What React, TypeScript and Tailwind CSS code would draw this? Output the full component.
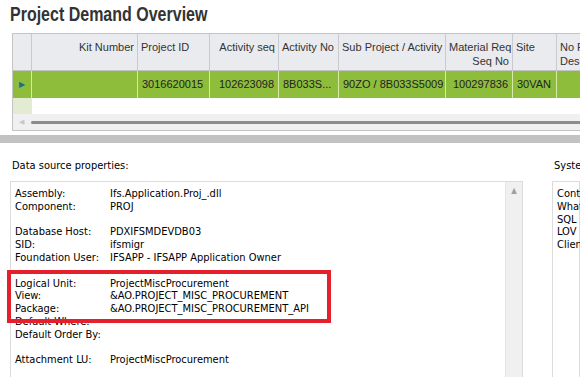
const cols = [
  { w: 19, head: [""], val: "", align: "left" },
  { w: 106, head: ["Kit Number"], val: "", align: "right" },
  { w: 72, head: ["Project ID"], val: "3016620015", align: "left" },
  { w: 69, head: ["Activity seq"], val: "102623098", align: "right" },
  { w: 60, head: ["Activity No"], val: "8B033S...", align: "left" },
  { w: 107, head: ["Sub Project / Activity"], val: "90ZO / 8B033S5009", align: "left" },
  { w: 67, head: ["Material Req", "Seq No"], val: "100297836", align: "right" },
  { w: 44, head: ["Site"], val: "30VAN", align: "left" },
  { w: 90, head: ["No Project", "Description"], val: "", align: "left" },
];

const props: [string, string][] = [
  ["Assembly:", "Ifs.Application.Proj_.dll"],
  ["Component:", "PROJ"],
  ["", ""],
  ["Database Host:", "PDXIFSMDEVDB03"],
  ["SID:", "ifsmigr"],
  ["Foundation User:", "IFSAPP - IFSAPP Application Owner"],
  ["", ""],
  ["Logical Unit:", "ProjectMiscProcurement"],
  ["View:", "&AO.PROJECT_MISC_PROCUREMENT"],
  ["Package:", "&AO.PROJECT_MISC_PROCUREMENT_API"],
  ["Default Where:", ""],
  ["Default Order By:", ""],
  ["", ""],
  ["Attachment LU:", "ProjectMiscProcurement"],
];

const winFont = { fontFamily: '"DejaVu Sans Condensed", "DejaVu Sans", sans-serif' };
const gridFont = { fontFamily: '"Liberation Sans", Arial, sans-serif' };

export default function App() {
  return (
    <div className="relative w-[580px] h-[377px] overflow-hidden bg-white">
      <div className="h-[33px] pl-[10px] pt-[3px]">
        <h1
          className="inline-block origin-left scale-x-[0.8] text-[20px] leading-[23px] font-bold text-[#333333] whitespace-nowrap"
          style={{ fontFamily: '"Liberation Sans", Arial, sans-serif' }}
        >
          Project Demand Overview
        </h1>
      </div>

      {/* grid */}
      <div className="ml-[12px] w-[600px] border border-[#c4c4c4] text-[11px] text-[#333333]" style={gridFont}>
        <div className="flex h-[37px] bg-[#eaebee] border-b border-[#c4c4c4]">
          {cols.map((c, i) => (
            <div
              key={i}
              className={`shrink-0 px-[3px] pt-[6px] leading-[14px] border-r border-[#c9cacd] whitespace-nowrap overflow-hidden ${
                c.align === "right" ? "text-right" : "text-left"
              }`}
              style={{ width: c.w }}
            >
              {c.head.map((h, j) => (
                <div key={j}>{h}</div>
              ))}
            </div>
          ))}
        </div>
        <div className="flex h-[27px] bg-[#8dbd3b] text-[#222222]">
          {cols.map((c, i) => (
            <div
              key={i}
              className={`shrink-0 flex items-center px-[4px] border-r border-[#d6eaa8] whitespace-nowrap overflow-hidden ${
                c.align === "right" ? "justify-end" : "justify-start"
              }`}
              style={{ width: c.w }}
            >
              {i === 0 ? <span className="text-[#1d6c96] text-[8px] pl-[2px]">▶</span> : c.val}
            </div>
          ))}
        </div>
        <div className="flex h-[16px]">
          <div className="w-[19px] bg-[#e4ebd3]" />
        </div>
        <div className="flex items-center h-[16px] bg-[#f0f0f0]">
          <span className="w-[18px] pl-[6px] text-[7px] text-[#c8c8c8]">◀</span>
          <div className="flex-1 h-[3px] bg-[#8c8c8c] rounded-full" />
        </div>
      </div>

      <div className="mt-[4px] h-[8px] bg-[#c2c2c2]" />

      {/* bottom */}
      <div className="flex text-[11px] text-black" style={winFont}>
        <div className="w-[523px] shrink-0">
          <div className="pl-[12px] pt-[16px] h-[38px] leading-[13px]">Data source properties:</div>
          <div className="ml-[10px] flex h-[200px] border border-[#dcdcdc]">
            <div className="flex-1 pl-[4px] pt-[6px] leading-[12.8px]">
              {props.map(([k, v], i) => (
                <div key={i} className="flex h-[12.8px] whitespace-nowrap">
                  <span className="w-[95px] shrink-0">{k}</span>
                  <span>{v}</span>
                </div>
              ))}
            </div>
            <div className="w-[17px] bg-[#f0f0f0] border-l border-[#e6e6e6] flex justify-center pt-[4px]">
              <span className="text-[8px] text-[#a0a0a0] leading-[10px]">▲</span>
            </div>
          </div>
        </div>
        <div className="w-[29px] shrink-0" />
        <div className="flex-1 overflow-hidden">
          <div className="pl-[2px] pt-[16px] h-[38px] leading-[13px] whitespace-nowrap">System information:</div>
          <div className="h-[200px] border border-[#dcdcdc] pl-[4px] pt-[6px] leading-[12.8px] whitespace-nowrap">
            <div>Context</div>
            <div>What's This</div>
            <div>
              SQL <span className="text-[#e0a050]">Statement</span>
            </div>
            <div>
              LOV <span className="text-[#d6b040]">Info</span>
            </div>
            <div>Client</div>
          </div>
        </div>
      </div>

      <div className="absolute left-[7px] top-[270px] w-[324px] h-[53px] border-4 border-[#e3202b]" />
    </div>
  );
}
